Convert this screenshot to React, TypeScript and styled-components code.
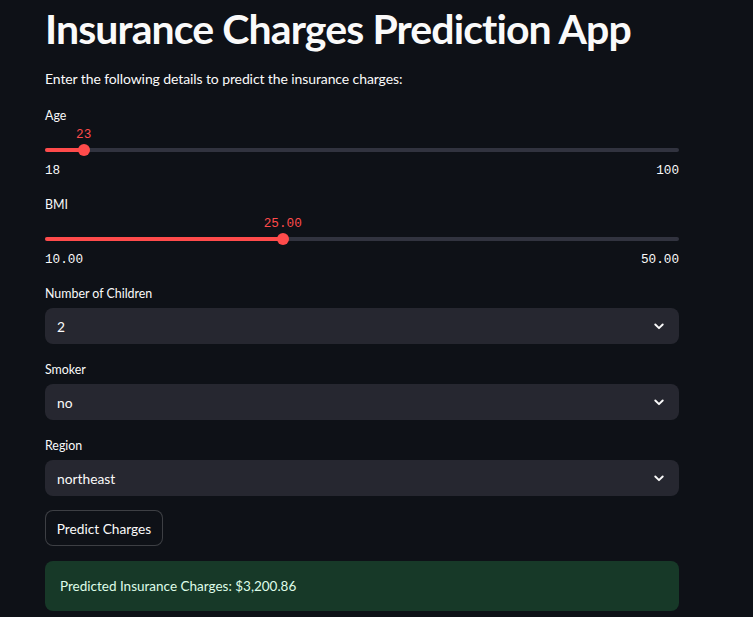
import React from "react";
import styled, { createGlobalStyle } from "styled-components";

const Global = createGlobalStyle`
  html, body { margin: 0; padding: 0; background: #0e1117; }
  body { font-family: Lato, "Noto Sans", sans-serif; color: #fafafa; }
  * { box-sizing: border-box; }
`;

const Page = styled.main`
  width: 753px;
  height: 617px;
  overflow: hidden;
  background: #0e1117;
  padding: 0 74px 0 45px;
`;

const Column = styled.div`
  width: 634px;
  display: flex;
  flex-direction: column;
`;

const Title = styled.h1`
  margin: 0;
  padding-top: 3px;
  font-size: 41px;
  line-height: 52px;
  font-weight: 700;
  letter-spacing: -0.9px;
  color: #fafafa;
  white-space: nowrap;
`;

const Subtitle = styled.p`
  margin: 12px 0 15px;
  font-size: 14px;
  line-height: 24px;
  letter-spacing: -0.1px;
  color: #fafafa;
`;

const Widget = styled.div<{ $gap?: number }>`
  display: flex;
  flex-direction: column;
  margin-bottom: ${(p) => p.$gap ?? 15}px;
`;

const Label = styled.label`
  font-size: 12.4px;
  line-height: 20px;
  height: 20px;
  color: #fafafa;
`;

const SliderBody = styled.div`
  position: relative;
  display: flex;
  flex-direction: column;
`;

const ValueRow = styled.div`
  position: relative;
  height: 14px;
`;

const Value = styled.span`
  position: absolute;
  top: 2px;
  transform: translateX(-50%);
  font-family: "Liberation Mono", "DejaVu Sans Mono", monospace;
  font-size: 12.7px;
  line-height: 14px;
  color: #ff4b4b;
  white-space: nowrap;
`;

const TrackRow = styled.div`
  position: relative;
  height: 20px;
  display: flex;
  align-items: center;
`;

const Track = styled.div`
  position: relative;
  width: 100%;
  height: 4px;
  border-radius: 2px;
  background: #31333f;
`;

const Fill = styled.div`
  position: absolute;
  left: 0;
  top: 0;
  height: 4px;
  border-radius: 2px;
  background: #ff4b4b;
`;

const Thumb = styled.div`
  position: absolute;
  top: 50%;
  width: 12px;
  height: 12px;
  border-radius: 50%;
  background: #ff4b4b;
  transform: translate(-50%, -50%);
`;

const Ticks = styled.div`
  height: 20px;
  display: flex;
  justify-content: space-between;
  align-items: center;
  font-family: "Liberation Mono", "DejaVu Sans Mono", monospace;
  font-size: 12.7px;
  color: #fafafa;
`;

const SelectBox = styled.div`
  margin-top: 4px;
  height: 36px;
  border-radius: 8px;
  background: #262730;
  display: flex;
  align-items: center;
  justify-content: space-between;
  padding: 0 15px 0 12px;
  font-size: 13.8px;
  color: #fafafa;
`;

const Button = styled.button`
  align-self: flex-start;
  width: 118px;
  height: 36px;
  padding: 0;
  margin-bottom: 15px;
  border: 1px solid rgba(250, 250, 250, 0.2);
  border-radius: 8px;
  background: #0e1117;
  color: #fafafa;
  font-family: Lato, "Noto Sans", sans-serif;
  font-size: 13.7px;
`;

const Alert = styled.div`
  height: 50px;
  border-radius: 8px;
  background: #173928;
  color: #dffde9;
  display: flex;
  align-items: center;
  padding: 0 15px;
  font-size: 13.5px;
`;

const Chevron = () => (
  <svg width="10" height="7" viewBox="0 0 10 7" aria-hidden="true">
    <path d="M1.3 1.5 L5 5.2 L8.7 1.5" fill="none" stroke="#fafafa" strokeWidth="1.9" strokeLinecap="round" strokeLinejoin="round" />
  </svg>
);

type SliderProps = { label: string; min: number; max: number; value: number; digits: number; gap?: number };

const Slider = ({ label, min, max, value, digits, gap }: SliderProps) => {
  const pct = ((value - min) / (max - min)) * 100;
  return (
    <Widget $gap={gap}>
      <Label>{label}</Label>
      <SliderBody>
        <ValueRow>
          <Value style={{ left: `${pct}%` }}>{value.toFixed(digits)}</Value>
        </ValueRow>
        <TrackRow>
          <Track>
            <Fill style={{ width: `${pct}%` }} />
            <Thumb style={{ left: `${pct}%` }} />
          </Track>
        </TrackRow>
        <Ticks>
          <span>{min.toFixed(digits)}</span>
          <span>{max.toFixed(digits)}</span>
        </Ticks>
      </SliderBody>
    </Widget>
  );
};

const Select = ({ label, value, gap }: { label: string; value: string; gap?: number }) => (
  <Widget $gap={gap}>
    <Label>{label}</Label>
    <SelectBox>
      <span>{value}</span>
      <Chevron />
    </SelectBox>
  </Widget>
);

export default function App() {
  return (
    <Page>
      <Global />
      <Column>
        <Title>Insurance Charges Prediction App</Title>
        <Subtitle>Enter the following details to predict the insurance charges:</Subtitle>
        <Slider label="Age" min={18} max={100} value={23} digits={0} />
        <Slider label="BMI" min={10} max={50} value={25} digits={2} gap={15} />
        <Select label="Number of Children" value="2" gap={16} />
        <Select label="Smoker" value="no" gap={16} />
        <Select label="Region" value="northeast" gap={14} />
        <Button>Predict Charges</Button>
        <Alert>Predicted Insurance Charges: $3,200.86</Alert>
      </Column>
    </Page>
  );
}
